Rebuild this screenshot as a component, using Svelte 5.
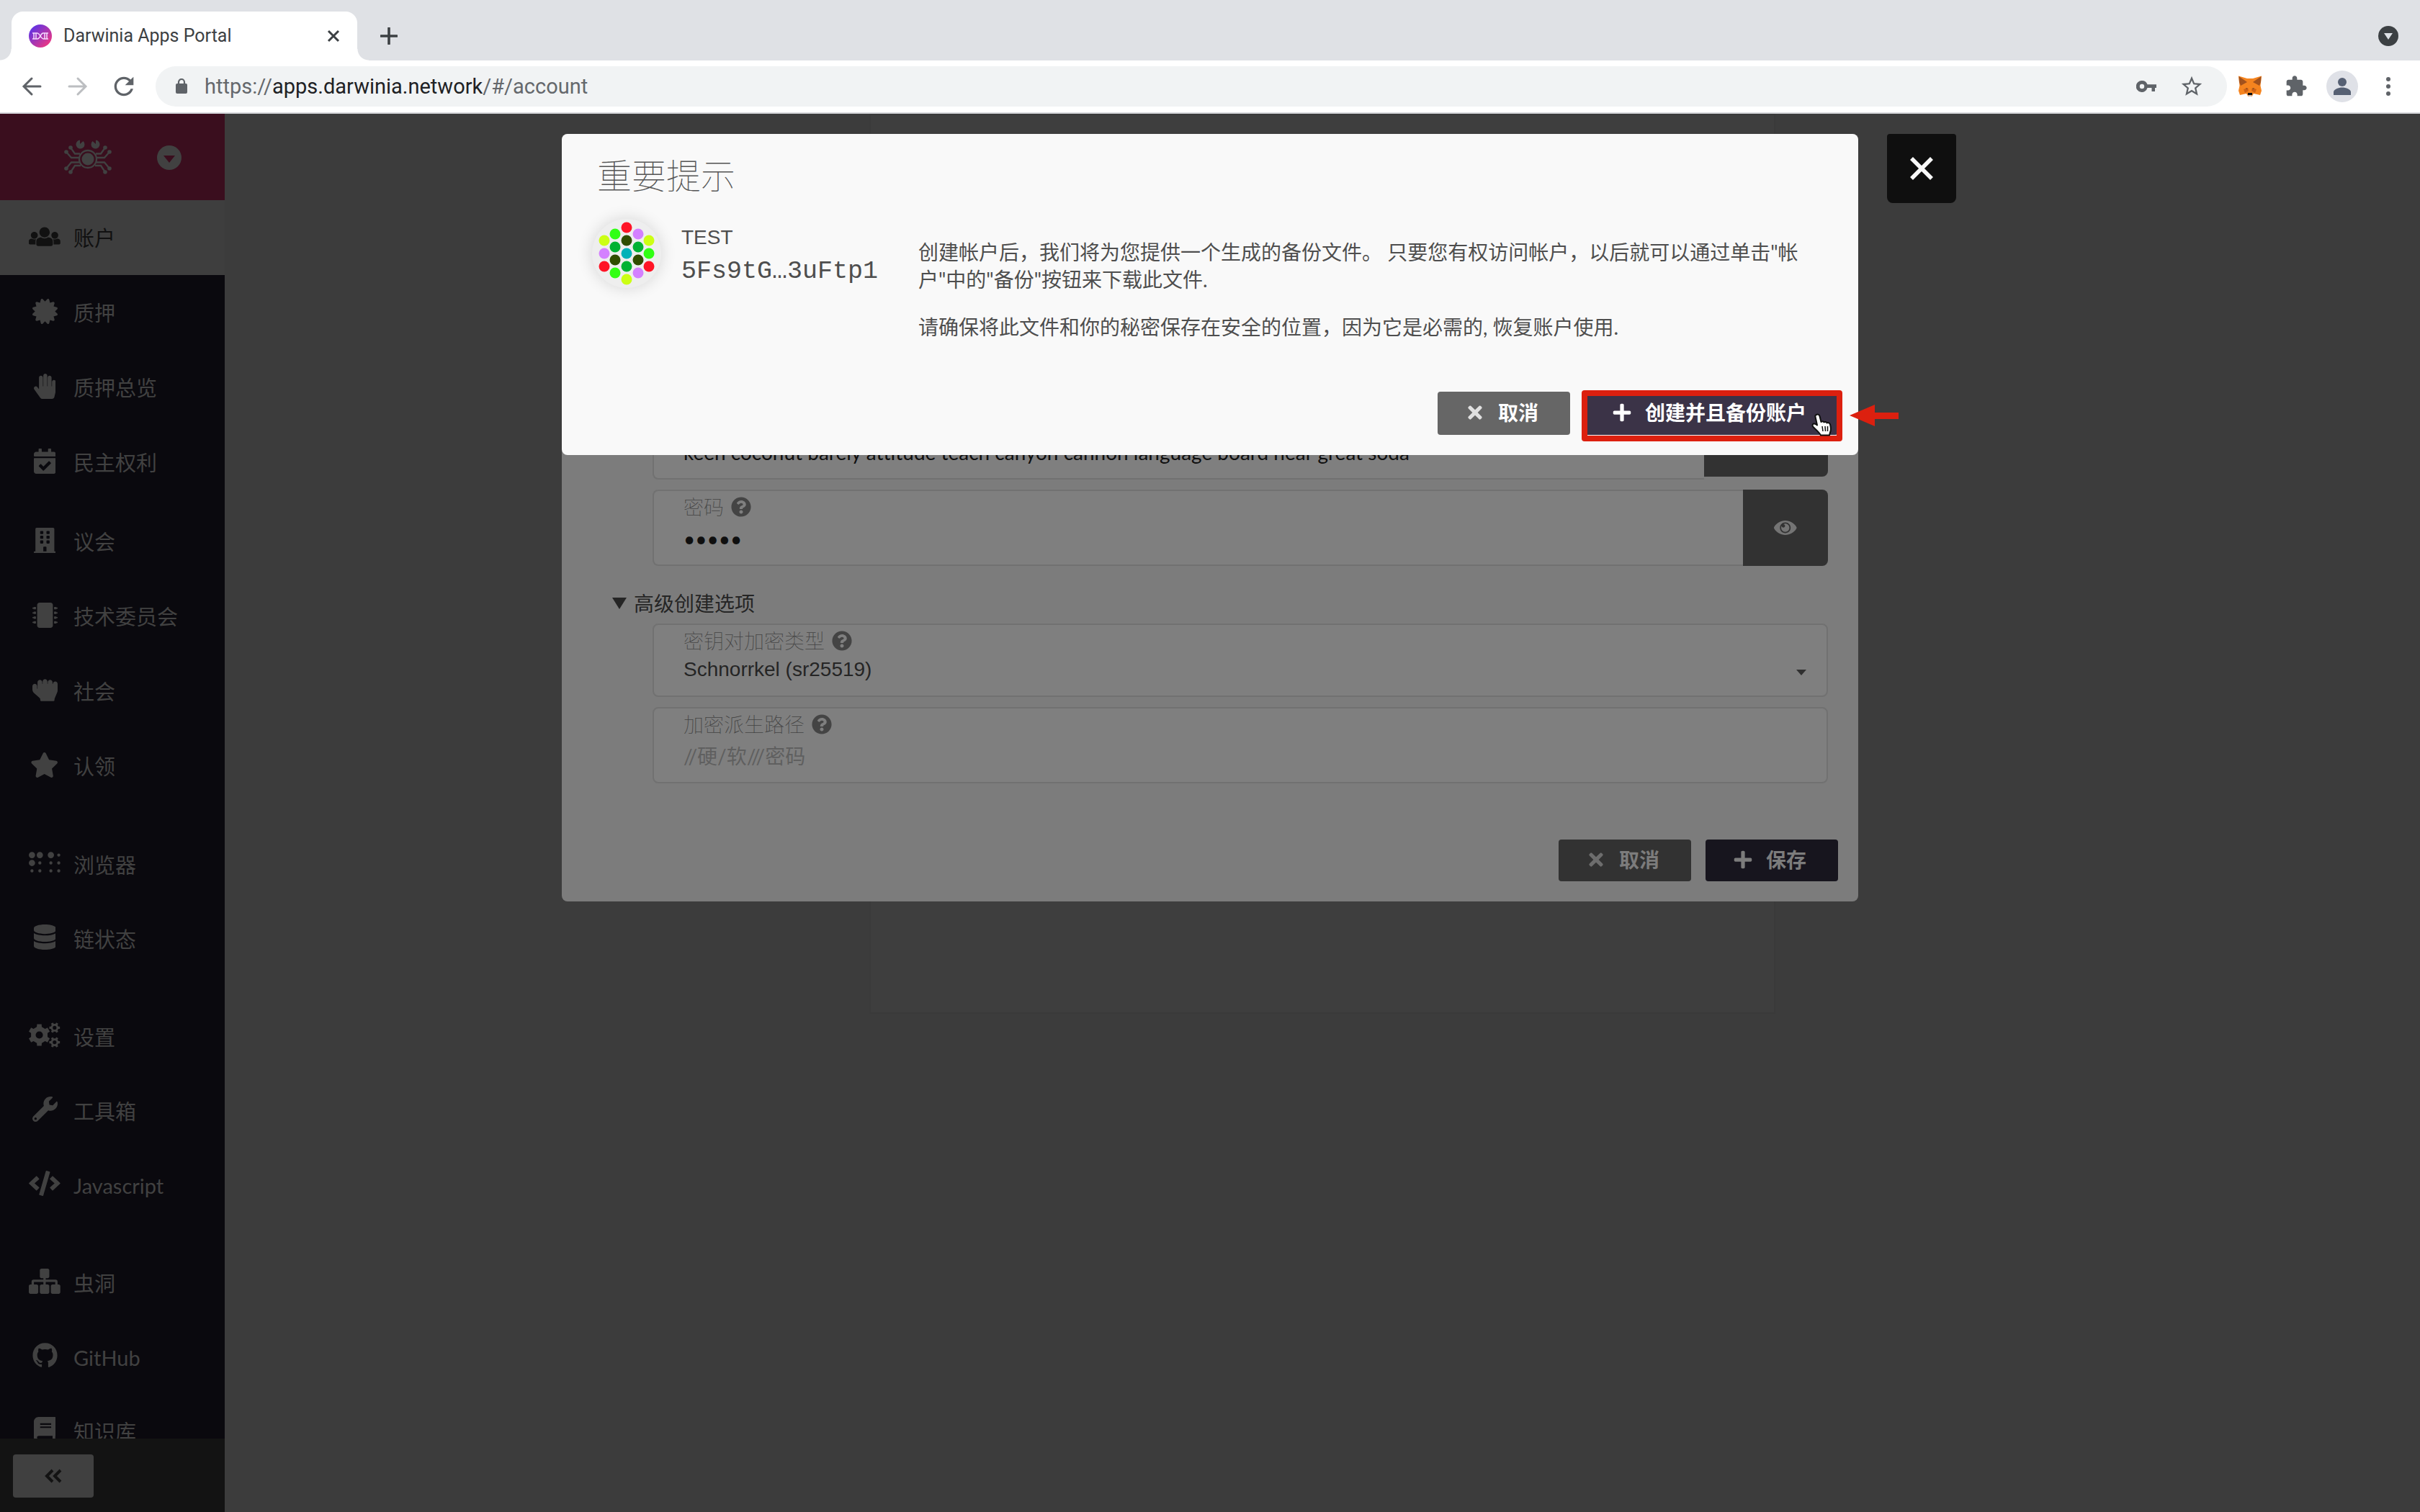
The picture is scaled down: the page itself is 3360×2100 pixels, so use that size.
<script>
  const glyphs = {
    users: { w: 640, d: 'M320 64c57.99 0 105 47.01 105 105s-47.01 105-105 105-105-47.01-105-105S262.01 64 320 64zm113.463 217.366l-39.982-9.996c-49.168 35.365-108.766 27.473-146.961 0l-39.982 9.996C174.485 289.379 152 318.177 152 351.216V412c0 19.882 16.118 36 36 36h264c19.882 0 36-16.118 36-36v-60.784c0-33.039-22.485-61.837-54.537-69.85zM528 300c38.66 0 70-31.34 70-70s-31.34-70-70-70-70 31.34-70 70 31.34 70 70 70zm-416 0c38.66 0 70-31.34 70-70s-31.34-70-70-70-70 31.34-70 70 31.34 70 70 70zm24 112v-60.784c0-16.551 4.593-32.204 12.703-45.599-29.988 14.72-63.336 8.708-85.69-7.37l-26.655 6.664C14.99 310.252 0 329.452 0 351.477V392c0 13.255 10.745 24 24 24h112.169a52.417 52.417 0 0 1-.169-4zm467.642-107.09l-26.655-6.664c-27.925 20.086-60.89 19.233-85.786 7.218C499.369 318.893 504 334.601 504 351.216V412c0 1.347-.068 2.678-.169 4H616c13.255 0 24-10.745 24-24v-40.523c0-22.025-14.99-41.225-36.358-46.567z' },
    certificate: { w: 512, d: 'M458.622 255.92l45.985-45.005c13.708-12.977 7.316-36.039-10.664-40.339l-62.65-15.99 17.661-62.015c4.991-17.838-11.829-34.663-29.661-29.671l-61.994 17.667-15.984-62.671C337.085.197 313.765-6.276 300.99 7.228L256 53.57 211.011 7.229c-12.63-13.351-36.047-7.234-40.325 10.668l-15.984 62.671-61.995-17.667C74.87 57.907 58.056 74.738 63.046 92.572l17.661 62.015-62.65 15.99C.069 174.878-6.31 197.944 7.392 210.915l45.985 45.005-45.985 45.004c-13.708 12.977-7.316 36.039 10.664 40.339l62.65 15.99-17.661 62.015c-4.991 17.838 11.829 34.663 29.661 29.671l61.994-17.667 15.984 62.671c4.439 18.575 27.696 24.018 40.325 10.668L256 458.61l44.989 46.001c12.5 13.488 35.987 7.486 40.325-10.668l15.984-62.671 61.994 17.667c17.836 4.994 34.651-11.837 29.661-29.671l-17.661-62.015 62.65-15.99c17.987-4.302 24.366-27.367 10.664-40.339l-45.984-45.004z' },
    handPaper: { w: 448, d: 'M408.781 128.007C386.356 127.578 368 146.36 368 168.79V256h-8V79.79c0-22.43-18.356-41.212-40.781-40.783C297.488 39.423 280 57.169 280 79v177h-8V40.79C272 18.36 253.644-.422 231.219.007 209.488.423 192 18.169 192 40v216h-8V80.79c0-22.43-18.356-41.212-40.781-40.783C121.488 40.423 104 58.169 104 80v235.992l-31.648-43.519c-12.993-17.866-38.009-21.817-55.877-8.823-17.865 12.994-21.815 38.01-8.822 55.877l125.601 172.705A48 48 0 0 0 172.073 512h197.59c22.274 0 41.622-15.324 46.724-37.006l26.508-112.66a192.011 192.011 0 0 0 5.104-43.975V168c.001-21.831-17.487-39.577-39.218-39.993z' },
    calendarCheck: { w: 448, d: 'M436 160H12c-6.627 0-12-5.373-12-12v-36c0-26.51 21.49-48 48-48h48V12c0-6.627 5.373-12 12-12h40c6.627 0 12 5.373 12 12v52h128V12c0-6.627 5.373-12 12-12h40c6.627 0 12 5.373 12 12v52h48c26.51 0 48 21.49 48 48v36c0 6.627-5.373 12-12 12zM12 192h424c6.627 0 12 5.373 12 12v260c0 26.51-21.49 48-48 48H48c-26.51 0-48-21.49-48-48V204c0-6.627 5.373-12 12-12zm333.296 95.947l-28.169-28.398c-4.667-4.705-12.265-4.736-16.97-.068L194.12 364.665l-45.98-46.352c-4.667-4.705-12.266-4.736-16.971-.068l-28.397 28.17c-4.705 4.667-4.736 12.265-.068 16.97l82.601 83.269c4.667 4.705 12.265 4.736 16.97.068l142.953-141.805c4.705-4.667 4.736-12.265.068-16.97z' },
    building: { w: 448, d: 'M436 480h-20V24c0-13.255-10.745-24-24-24H56C42.745 0 32 10.745 32 24v456H12c-6.627 0-12 5.373-12 12v20h448v-20c0-6.627-5.373-12-12-12zM128 76c0-6.627 5.373-12 12-12h40c6.627 0 12 5.373 12 12v40c0 6.627-5.373 12-12 12h-40c-6.627 0-12-5.373-12-12V76zm0 96c0-6.627 5.373-12 12-12h40c6.627 0 12 5.373 12 12v40c0 6.627-5.373 12-12 12h-40c-6.627 0-12-5.373-12-12v-40zm52 148h-40c-6.627 0-12-5.373-12-12v-40c0-6.627 5.373-12 12-12h40c6.627 0 12 5.373 12 12v40c0 6.627-5.373 12-12 12zm76 160h-64v-84c0-6.627 5.373-12 12-12h40c6.627 0 12 5.373 12 12v84zm64-172c0 6.627-5.373 12-12 12h-40c-6.627 0-12-5.373-12-12v-40c0-6.627 5.373-12 12-12h40c6.627 0 12 5.373 12 12v40zm0-96c0 6.627-5.373 12-12 12h-40c-6.627 0-12-5.373-12-12v-40c0-6.627 5.373-12 12-12h40c6.627 0 12 5.373 12 12v40zm0-96c0 6.627-5.373 12-12 12h-40c-6.627 0-12-5.373-12-12V76c0-6.627 5.373-12 12-12h40c6.627 0 12 5.373 12 12v40z' },
    microchip: { w: 512, d: chip() },
    handRock: { w: 512, d: 'M464.8 80c-26.9-.4-48.8 21.2-48.8 48h-8V96.8c0-26.3-20.9-48.3-47.2-48.8-26.9-.4-48.8 21.2-48.8 48v32h-8V80.8c0-26.3-20.9-48.3-47.2-48.8-26.9-.4-48.8 21.2-48.8 48v48h-8V96.8c0-26.3-20.9-48.3-47.2-48.8-26.9-.4-48.8 21.2-48.8 48v136l-8-7.1v-48.1c0-26.3-20.9-48.3-47.2-48.8C21.9 127.6 0 149.2 0 176v66.4c0 27.4 11.7 53.5 32.2 71.8l111.7 99.3c10.2 9.1 16.1 22.2 16.1 35.9v6.7c0 13.3 10.7 24 24 24h240c13.3 0 24-10.7 24-24v-2.9c0-12.8 2.6-25.5 7.5-37.3l49-116.3c5-11.8 7.5-24.5 7.5-37.3V128.8c0-26.3-20.9-48.4-47.2-48.8z' },
    star: { w: 576, d: 'M259.3 17.8L194 150.2 47.9 171.5c-26.2 3.8-36.7 36.1-17.7 54.6l105.7 103-25 145.5c-4.5 26.3 23.2 46 46.4 33.7L288 439.6l130.7 68.7c23.2 12.2 50.9-7.4 46.4-33.7l-25-145.5 105.7-103c19-18.5 8.5-50.8-17.7-54.6L382 150.2 316.7 17.8c-11.7-23.6-45.6-23.9-57.4 0z' },
    braille: { w: 640, d: [[64, 96, 64], [224, 96, 64], [64, 256, 64], [448, 96, 64], [608, 96, 32], [224, 256, 32], [448, 256, 32], [608, 256, 32], [64, 416, 32], [224, 416, 32], [448, 416, 32], [608, 416, 32]].map(([x, y, r]) => dot(x, y, r)).join('') },
    database: { w: 448, d: 'M448 73.143v45.714C448 159.143 347.667 192 224 192S0 159.143 0 118.857V73.143C0 32.857 100.333 0 224 0s224 32.857 224 73.143zM448 176v102.857C448 319.143 347.667 352 224 352S0 319.143 0 278.857V176c48.125 33.143 136.208 48.572 224 48.572S399.874 209.143 448 176zm0 160v102.857C448 479.143 347.667 512 224 512S0 479.143 0 438.857V336c48.125 33.143 136.208 48.572 224 48.572S399.874 369.143 448 336z' },
    cogs: { w: 640, d: gear(213, 256, 172, 224, 74, 30) + gear(524, 108, 80, 110, 38, 0) + gear(524, 404, 80, 110, 38, 0) },
    wrench: { w: 512, d: 'M507.73 109.1c-2.24-9.03-13.54-12.09-20.12-5.51l-74.36 74.36-67.88-11.31-11.31-67.88 74.36-74.36c6.62-6.62 3.43-17.9-5.66-20.16-47.38-11.74-99.55.91-136.58 37.93-39.64 39.64-50.55 97.1-34.05 147.2L18.74 402.76c-24.99 24.99-24.99 65.51 0 90.5 24.99 24.99 65.51 24.99 90.5 0l213.21-213.21c50.12 16.71 107.47 5.68 147.37-34.22 37.07-37.07 49.7-89.32 37.91-136.73zM64 472c-13.25 0-24-10.75-24-24 0-13.26 10.75-24 24-24s24 10.74 24 24c0 13.25-10.75 24-24 24z' },
    code: { w: 640, d: 'M278.9 511.5l-61-17.7c-6.4-1.8-10-8.5-8.2-14.9L346.2 8.7c1.8-6.4 8.5-10 14.9-8.2l61 17.7c6.4 1.8 10 8.5 8.2 14.9L293.8 503.3c-1.9 6.4-8.5 10.1-14.9 8.2zm-114-112.2l43.5-46.4c4.6-4.9 4.3-12.7-.8-17.2L117 256l90.6-79.7c5.1-4.5 5.5-12.3.8-17.2l-43.5-46.4c-4.5-4.8-12.1-5.1-17-.5L3.8 247.2c-5.1 4.7-5.1 12.8 0 17.5l144.1 135.1c4.9 4.6 12.5 4.4 17-.5zm327.2.6l144.1-135.1c5.1-4.7 5.1-12.8 0-17.5L492.1 112.1c-4.8-4.5-12.4-4.3-17 .5L431.6 159c-4.6 4.9-4.3 12.7.8 17.2L523 256l-90.6 79.7c-5.1 4.5-5.5 12.3-.8 17.2l43.5 46.4c4.5 4.9 12.1 5.1 17 .6z' },
    sitemap: { w: 640, d: 'M32 320c-17.67 0-32 14.33-32 32v128c0 17.67 14.33 32 32 32h128c17.67 0 32-14.33 32-32V352c0-17.67-14.33-32-32-32h-56v-48h192v48h-40c-17.67 0-32 14.33-32 32v128c0 17.67 14.33 32 32 32h128c17.67 0 32-14.33 32-32V352c0-17.67-14.33-32-32-32h-40v-48h192v48h-56c-17.67 0-32 14.33-32 32v128c0 17.67 14.33 32 32 32h128c17.67 0 32-14.33 32-32V352c0-17.67-14.33-32-32-32h-24v-57.590c0-21.170-17.230-38.410-38.410-38.410H344v-32h40c17.670 0 32-14.330 32-32V32c0-17.670-14.330-32-32-32H256c-17.670 0-32 14.330-32 32v128c0 17.670 14.330 32 32 32h40v32H94.410C73.230 224 56 241.230 56 262.410V320z' },
    github: { w: 512, d: 'M256 5C115 5 6 118 6 256c0 111 70 205 169 238 13 2 17-6 17-12l-.4-46c-68 14-82-29-82-29-11-28-27-36-27-36-22-15 2-15 2-15 25 2 38 26 38 26 22 38 58 27 72 21 2-16 9-27 16-33-55-6-113-28-113-124 0-27 10-50 26-67-3-6-11-32 2-66 0 0 21-7 69 26 20-6 42-9 63-9s43 3 63 9c48-33 69-26 69-26 14 34 5 60 2 66 16 17 26 40 26 67 0 96-58 117-114 124 9 8 17 23 17 46l-.4 69c0 7 5 14 17 12C437 461 506 367 506 256 506 118 397 5 256 5z' },
    book: { w: 448, d: 'M448 360V24c0-13.3-10.7-24-24-24H96C43 0 0 43 0 96v320c0 53 43 96 96 96h328c13.3 0 24-10.7 24-24v-16c0-7.5-3.5-14.3-8.9-18.7-4.2-15.4-4.2-59.3 0-74.7 5.4-4.3 8.9-11.1 8.9-18.6zM128 134c0-3.3 2.7-6 6-6h212c3.3 0 6 2.7 6 6v20c0 3.3-2.7 6-6 6H134c-3.3 0-6-2.7-6-6v-20zm0 64c0-3.3 2.7-6 6-6h212c3.3 0 6 2.7 6 6v20c0 3.3-2.7 6-6 6H134c-3.3 0-6-2.7-6-6v-20zm253.4 250H96c-17.7 0-32-14.3-32-32 0-17.6 14.4-32 32-32h285.4c-1.9 17.1-1.9 46.9 0 64z' },
    question: { w: 512, d: 'M504 256c0 136.997-111.043 248-248 248S8 392.997 8 256C8 119.083 119.043 8 256 8s248 111.083 248 248zM262.655 90c-54.497 0-89.255 22.957-116.549 63.758-3.536 5.286-2.353 12.415 2.715 16.258l34.699 26.31c5.205 3.947 12.621 3.008 16.665-2.122 17.864-22.658 30.113-35.797 57.303-35.797 20.429 0 45.698 13.148 45.698 32.958 0 14.976-12.363 22.667-32.534 33.976C247.128 238.528 216 254.941 216 296v4c0 6.627 5.373 12 12 12h56c6.627 0 12-5.373 12-12v-1.333c0-28.462 83.186-29.647 83.186-106.667 0-58.002-60.165-102-116.531-102zM256 338c-25.365 0-46 20.635-46 46 0 25.364 20.635 46 46 46s46-20.636 46-46c0-25.365-20.635-46-46-46z' },
    eye: { w: 576, d: 'M569.354 231.631C512.969 135.949 407.81 72 288 72 168.14 72 63.004 135.994 6.646 231.631a47.999 47.999 0 0 0 0 48.739C63.031 376.051 168.19 440 288 440c119.86 0 224.996-63.994 281.354-159.631a47.997 47.997 0 0 0 0-48.738zM288 392c-75.162 0-136-60.827-136-136 0-75.162 60.826-136 136-136 75.162 0 136 60.826 136 136 0 75.162-60.826 136-136 136zm104-136c0 57.438-46.562 104-104 104s-104-46.562-104-104c0-17.708 4.431-34.379 12.236-48.973l-.001.032c0 23.651 19.173 42.823 42.824 42.823s42.824-19.173 42.824-42.823c0-23.651-19.173-42.824-42.824-42.824l-.032.001C253.621 156.431 270.292 152 288 152c57.438 0 104 46.562 104 104z' },
    plus: { w: 448, d: 'M416 208H272V64c0-17.67-14.33-32-32-32h-32c-17.67 0-32 14.33-32 32v144H32c-17.67 0-32 14.33-32 32v32c0 17.67 14.33 32 32 32h144v144c0 17.67 14.33 32 32 32h32c17.67 0 32-14.33 32-32V304h144c17.67 0 32-14.33 32-32v-32c0-17.67-14.33-32-32-32z' },
    times: { w: 352, d: 'M242.72 256l100.07-100.07c12.28-12.28 12.28-32.19 0-44.48l-22.24-22.24c-12.28-12.28-32.19-12.28-44.48 0L176 189.28 75.93 89.21c-12.28-12.28-32.19-12.28-44.48 0L9.21 111.45c-12.28 12.28-12.28 32.19 0 44.48L109.28 256 9.21 356.07c-12.28 12.28-12.28 32.19 0 44.48l22.24 22.24c12.28 12.28 32.2 12.28 44.48 0L176 322.72l100.07 100.07c12.28 12.28 32.2 12.28 44.48 0l22.24-22.24c12.28-12.28 12.28-32.19 0-44.48L242.72 256z' },
  };

  function dot(x, y, r) {
    return `M${x - r} ${y}a${r} ${r} 0 1 0 ${2 * r} 0a${r} ${r} 0 1 0 ${-2 * r} 0z`;
  }

  function gear(cx, cy, inner, outer, hole, phase) {
    const steps = [[-17, inner], [-12, outer], [12, outer], [17, inner]];
    const points = [];
    for (let tooth = 0; tooth < 6; tooth++) {
      for (const [offset, radius] of steps) {
        const a = ((phase + tooth * 60 + offset) * Math.PI) / 180;
        points.push(`${(cx + radius * Math.cos(a)).toFixed(1)} ${(cy + radius * Math.sin(a)).toFixed(1)}`);
      }
    }
    return `M${points.join('L')}z` + dot(cx, cy, hole);
  }

  function chip() {
    const pins = [88, 184, 280, 376]
      .map((y) => `M440 ${y}h42a6 6 0 0 1 6 6v6h18a6 6 0 0 1 6 6v12a6 6 0 0 1-6 6h-18v6a6 6 0 0 1-6 6h-42zM72 ${y}v48H30a6 6 0 0 1-6-6v-6H6a6 6 0 0 1-6-6v-12a6 6 0 0 1 6-6h18v-6a6 6 0 0 1 6-6z`)
      .join('');
    return 'M416 48v416c0 26.51-21.49 48-48 48H144c-26.51 0-48-21.49-48-48V48c0-26.51 21.49-48 48-48h224c26.51 0 48 21.49 48 48z' + pins;
  }

  const menu = [
    [
      { icon: 'users', text: '账户', active: true },
      { icon: 'certificate', text: '质押' },
      { icon: 'handPaper', text: '质押总览' },
      { icon: 'calendarCheck', text: '民主权利' },
    ],
    [
      { icon: 'building', text: '议会' },
      { icon: 'microchip', text: '技术委员会' },
      { icon: 'handRock', text: '社会' },
      { icon: 'star', text: '认领' },
    ],
    [
      { icon: 'braille', text: '浏览器' },
      { icon: 'database', text: '链状态' },
    ],
    [
      { icon: 'cogs', text: '设置' },
      { icon: 'wrench', text: '工具箱' },
      { icon: 'code', text: 'Javascript' },
    ],
    [
      { icon: 'sitemap', text: '虫洞' },
      { icon: 'github', text: 'GitHub' },
      { icon: 'book', text: '知识库' },
    ],
  ];

  const red = '#ff1426', lime = '#ccff14', green = '#31ff14', leaf = '#00b233';
  const olive = '#304d00', violet = '#d480ff', teal = '#00b2b8';
  const identicon = [
    [0, -36, red], [0, -18, olive], [0, 0, teal], [0, 18, leaf], [0, 36, lime],
    [-16, -27, green], [-16, -9, leaf], [-16, 9, olive], [-16, 27, green],
    [16, -27, violet], [16, -9, leaf], [16, 9, olive], [16, 27, violet],
    [-31, -18, lime], [-31, 0, violet], [-31, 18, red],
    [31, -18, lime], [31, 0, green], [31, 18, red],
  ];

  let seed = $state('keen coconut barely attitude teach canyon cannon language board near great soda');
  let password = $state('12345');
  let derive = $state('');
</script>

{#snippet icon(name)}
  <svg class="glyph" viewBox="0 0 {glyphs[name].w} 512" aria-hidden="true"><path fill-rule={name === 'cogs' ? 'evenodd' : 'nonzero'} d={glyphs[name].d} /></svg>
{/snippet}

<div class="window">
  <header>
    <div class="tabs">
      <div class="tab">
        <svg class="favicon" viewBox="0 0 32 32" aria-hidden="true">
          <defs>
            <linearGradient id="fav" x1="0" y1="0" x2="1" y2="1">
              <stop offset=".1" stop-color="#5b33e8" /><stop offset=".9" stop-color="#f0377f" />
            </linearGradient>
          </defs>
          <circle cx="16" cy="16" r="16" fill="url(#fav)" />
          <path d="M5 12h7M5 20h7M7 12v8M10 12v8M20 12h7M20 20h7M22 12v8M25 12v8M12 12c4 1 4 7 8 8M12 20c2 0 3-2 4-4s2-4 4-4" fill="none" stroke="#f3d9ff" stroke-width="1.5" />
        </svg>
        <span class="tab-title">Darwinia Apps Portal</span>
        <button class="plain" aria-label="Close tab">
          <svg width="18" height="18" viewBox="0 0 18 18"><path d="M2 2l14 14M16 2L2 16" stroke="#3c4043" stroke-width="3" /></svg>
        </button>
      </div>
      <button class="plain new-tab" aria-label="New tab">
        <svg width="24" height="24" viewBox="0 0 24 24"><path d="M12 1v22M1 12h22" stroke="#3c4043" stroke-width="3.6" stroke-linecap="round" /></svg>
      </button>
      <button class="plain search-tabs" aria-label="Search tabs">
        <svg width="28" height="28" viewBox="0 0 28 28"><circle cx="14" cy="14" r="14" fill="#3c4043" /><path d="M8 10h12l-6 9z" fill="#dee1e6" /></svg>
      </button>
    </div>
    <div class="toolbar">
      <button class="plain nav" aria-label="Back">
        <svg width="28" height="28" viewBox="0 0 28 28"><path d="M26 14H4M14 3L3 14l11 11" fill="none" stroke="#5f6368" stroke-width="3" stroke-linecap="round" /></svg>
      </button>
      <button class="plain nav" aria-label="Forward">
        <svg width="28" height="28" viewBox="0 0 28 28"><path d="M2 14h22M14 3l11 11-11 11" fill="none" stroke="#bcbec1" stroke-width="3" stroke-linecap="round" /></svg>
      </button>
      <button class="plain nav" aria-label="Reload">
        <svg width="40" height="40" viewBox="0 0 24 24"><path fill="#5f6368" d="M17.65 6.35C16.2 4.9 14.21 4 12 4c-4.42 0-7.99 3.58-7.99 8s3.57 8 7.99 8c3.73 0 6.84-2.55 7.73-6h-2.08c-.82 2.33-3.04 4-5.65 4-3.31 0-6-2.69-6-6s2.69-6 6-6c1.66 0 3.14.69 4.22 1.78L13 11h7V4l-2.35 2.35z" /></svg>
      </button>
      <div class="omnibox">
        <svg width="16" height="22" viewBox="0 0 16 22" aria-hidden="true"><rect y="7" width="16" height="14" rx="2" fill="#5f6368" /><path d="M4 8V5a4 4 0 0 1 8 0v3" fill="none" stroke="#5f6368" stroke-width="2.2" /></svg>
        <span class="url">https://<b>apps.darwinia.network</b>/#/account</span>
        <button class="plain key" aria-label="Saved passwords">
          <svg width="28" height="16" viewBox="0 0 28 16"><path fill="#5f6368" fill-rule="evenodd" d="M8 0a8 8 0 0 1 7.5 5.200H28v4.800h-2v5h-4.500v-5h-6A8 8 0 1 1 8 0zM8 4.800a3.200 3.200 0 1 0 0 6.400a3.200 3.200 0 1 0 0-6.400z" /></svg>
        </button>
        <button class="plain" aria-label="Bookmark">
          <svg width="34" height="34" viewBox="0 0 24 24"><path fill="#5f6368" d="M22 9.240l-7.190-.62L12 2 9.190 8.630 2 9.240l5.460 4.730L5.820 21 12 17.270 18.180 21l-1.630-7.030L22 9.240zM12 15.400l-3.760 2.270 1-4.280-3.320-2.880 4.380-.38L12 6.100l1.710 4.040 4.380.38-3.320 2.880 1 4.280L12 15.400z" /></svg>
        </button>
      </div>
      <button class="plain ext" aria-label="MetaMask">
        <svg width="32" height="30" viewBox="0 0 32 30">
          <path fill="#f5841f" d="M0 .5L12 4h8L32 .5 30.500 14 32 21l-2 6-9-2-2.500 4h-5L11 25l-9 2-2-6 1.500-7z" />
          <path fill="#a2521d" d="M.5 1L12 9 3 14 1 9zM31.500 1L20 9l9 5 2-5z" />
          <path fill="#cd6116" d="M7 19l6-2 1 4-5 3zM25 19l-6-2-1 4 5 3z" />
          <path fill="#d7c1b3" d="M13 26h6l-1 3h-4z" /><path fill="#111" d="M13 24h6v3h-6z" /><path fill="#333" d="M10 17l3 1.500h-2zM22 17l-3 1.500h2z" />
        </svg>
      </button>
      <button class="plain ext" aria-label="Extensions">
        <svg width="32" height="32" viewBox="0 0 24 24"><path fill="#5f6368" d="M20.500 11H19V7c0-1.100-.9-2-2-2h-4V3.500C13 2.120 11.880 1 10.500 1S8 2.120 8 3.500V5H4c-1.100 0-1.990.9-1.990 2v3.800H3.500c1.490 0 2.700 1.210 2.700 2.700s-1.210 2.700-2.700 2.700H2V20c0 1.100.9 2 2 2h3.800v-1.500c0-1.490 1.210-2.700 2.700-2.700 1.490 0 2.700 1.210 2.700 2.700V22H17c1.100 0 2-.9 2-2v-4h1.500c1.380 0 2.500-1.120 2.500-2.500S21.880 11 20.500 11z" /></svg>
      </button>
      <button class="plain ext" aria-label="Profile">
        <svg width="44" height="44" viewBox="0 0 44 44"><circle cx="22" cy="22" r="22" fill="#dfe1e7" /><circle cx="22" cy="16" r="6" fill="#566073" /><path d="M10 34v-4c0-4 7-6.500 12-6.500S34 26 34 30v4z" fill="#566073" /></svg>
      </button>
      <button class="plain ext" aria-label="Menu">
        <svg width="6" height="26" viewBox="0 0 6 26" fill="#5f6368"><circle cx="3" cy="3" r="3" /><circle cx="3" cy="13" r="3" /><circle cx="3" cy="23" r="3" /></svg>
      </button>
    </div>
  </header>

  <div class="app">
    <nav class="sidebar">
      <div class="brand">
        <svg class="crab" width="66" height="50" viewBox="0 0 66 50" aria-hidden="true">
          <g fill="none" stroke="#414141" stroke-width="2.300">
            <circle cx="33" cy="27" r="12" />
            <path d="M3 17l7 8h11M9 11l6 8.500h7M3 40l7-8.500h11M9 45l6-9h8M63 17l-7 8H45M57 11l-6 8.500h-7M63 40l-7-8.500H45M57 45l-6-9h-8" />
          </g>
          <g fill="#414141">
            <circle cx="33" cy="27" r="8.500" />
            <circle cx="3" cy="17" r="2.800" /><circle cx="9" cy="11" r="2.800" /><circle cx="3" cy="40" r="2.800" /><circle cx="9" cy="45" r="2.800" />
            <circle cx="63" cy="17" r="2.800" /><circle cx="57" cy="11" r="2.800" /><circle cx="63" cy="40" r="2.800" /><circle cx="57" cy="45" r="2.800" />
            <path d="M22 .5v5.500l4.500-4A6 6 0 1 1 22 .5zM44 .5v5.500l-4.500-4A6 6 0 1 0 44 .5z" />
          </g>
        </svg>
        <button class="plain" aria-label="Switch network">
          <svg width="34" height="34" viewBox="0 0 34 34"><circle cx="17" cy="17" r="17" fill="#414141" /><path d="M9 14h16l-8 10z" fill="#3a0e1e" /></svg>
        </button>
      </div>
      <div class="menu">
        {#each menu as group}
          <ul>
            {#each group as item}
              <li>
                <a href="#/{item.icon}" class:active={item.active}>
                  <span class="pic">{@render icon(item.icon)}</span>
                  <span>{item.text}</span>
                </a>
              </li>
            {/each}
          </ul>
        {/each}
      </div>
      <div class="collapse">
        <button aria-label="Collapse">
          <svg width="24" height="20" viewBox="0 0 24 20"><path d="M11 2L3 10l8 8M22 2l-8 8 8 8" fill="none" stroke="#131313" stroke-width="4" /></svg>
        </button>
      </div>
    </nav>

    <main><div class="segment"></div></main>

    <div class="overlay">
      <div class="stack">
        <form class="modal create" onsubmit={(e) => e.preventDefault()}>
          <div class="field split">
            <div class="entry bare"><input type="text" aria-label="seed" bind:value={seed} /></div>
            <button type="button" class="side wide" aria-label="seed type"></button>
          </div>
          <div class="field">
            <div class="entry">
              <label for="pw">密码 {@render icon('question')}</label>
              <input id="pw" type="password" bind:value={password} />
            </div>
            <button type="button" class="side" aria-label="show">{@render icon('eye')}</button>
          </div>
          <details open>
            <summary><svg width="20" height="16" viewBox="0 0 20 16" aria-hidden="true"><path d="M0 0h20L10 16z" /></svg>高级创建选项</summary>
            <div class="field">
              <div class="entry closed choice">
                <label for="kind">密钥对加密类型 {@render icon('question')}</label>
                <select id="kind"><option>Schnorrkel (sr25519)</option></select>
                <svg class="caret" width="14" height="8" viewBox="0 0 14 8" aria-hidden="true"><path d="M0 0h14L7 8z" /></svg>
              </div>
            </div>
            <div class="field">
              <div class="entry closed">
                <label for="path">加密派生路径 {@render icon('question')}</label>
                <input id="path" type="text" placeholder="//硬/软///密码" bind:value={derive} />
              </div>
            </div>
          </details>
          <div class="actions">
            <button type="button" class="act grey">{@render icon('times')}取消</button>
            <button type="button" class="act dark">{@render icon('plus')}保存</button>
          </div>
        </form>

        <section class="modal notice">
          <h1>重要提示</h1>
          <div class="body">
            <svg class="ident" viewBox="-48 -48 96 96" aria-hidden="true">
              {#each identicon as [x, y, fill]}<circle cx={x} cy={y} r="7.500" {fill} />{/each}
            </svg>
            <div class="who">
              <div class="name">TEST</div>
              <div class="addr">5Fs9tG…3uFtp1</div>
            </div>
            <div class="copy">
              <p>创建帐户后，我们将为您提供一个生成的备份文件。 只要您有权访问帐户，以后就可以通过单击"帐户"中的"备份"按钮来下载此文件.</p>
              <p>请确保将此文件和你的秘密保存在安全的位置，因为它是必需的, 恢复账户使用.</p>
            </div>
          </div>
          <div class="actions">
            <button type="button" class="act grey">{@render icon('times')}取消</button>
            <div class="marked">
              <button type="button" class="act dark">{@render icon('plus')}创建并且备份账户</button>
              <div class="mark"></div>
              <svg class="arrow" width="68" height="30" viewBox="0 0 68 30" aria-hidden="true"><path fill="#dc200f" d="M0 15L35 0v11h33v9H35v10z" /></svg>
              <svg class="hand" width="30" height="32" viewBox="0 0 30 32" aria-hidden="true">
                <path fill="#fff" stroke="#111" stroke-width="2" stroke-linejoin="round" d="M7 2c2-1 4 0 4.500 2l2 8c1-1 3-1 4 .5 1-1 3.500-.5 4 1 1.500-1 4 0 4.500 2 1 4 2 7 0 11l-1 4H13c-2-4-6-7-10-11-2-2-2-4 0-5 2-.5 4 1 5 2L5.500 5c-.5-1.500 0-2.500 1.500-3z" />
                <path d="M15 18l1 7M19 18l.5 7M22.500 18v7" stroke="#111" stroke-width="1.500" />
              </svg>
            </div>
          </div>
        </section>
        <button class="close" aria-label="Close">
          <svg width="32" height="32" viewBox="0 0 32 32"><path d="M2 2l28 28M30 2L2 30" stroke="#f9f9f9" stroke-width="5.600" /></svg>
        </button>
      </div>
    </div>
  </div>
</div>

<style>
  :global(body) { margin: 0; }
  .window { height: 100vh; display: flex; flex-direction: column; overflow: hidden; font: 28px/38px Lato, 'Noto Sans CJK SC', sans-serif; }
  .window :global(*) { box-sizing: border-box; }
  svg { display: block; flex: none; }
  button, input, select { font: inherit; color: inherit; margin: 0; border: 0; padding: 0; }
  .plain { background: none; display: flex; align-items: center; justify-content: center; flex: none; }
  .glyph { fill: currentColor; height: 35px; }

  header { flex: none; background: #fff; border-bottom: 2px solid #d5d6da; font-family: Roboto, sans-serif; }
  .tabs { height: 84px; padding: 16px 30px 0 16px; display: flex; align-items: center; background: #dfe1e5; }
  .tab { width: 480px; height: 68px; padding: 0 24px; display: flex; align-items: center; gap: 16px; background: #fff; border-radius: 16px 16px 0 0; position: relative; }
  .tab::before, .tab::after { content: ''; position: absolute; bottom: 0; width: 16px; height: 16px; }
  .tab::before { right: 100%; background: radial-gradient(circle at 0 0, #dfe1e5 15px, #fff 16px); }
  .tab::after { left: 100%; background: radial-gradient(circle at 100% 0, #dfe1e5 15px, #fff 16px); }
  .favicon { width: 32px; height: 32px; }
  .tab-title { flex: 1; font-size: 25px; color: #3c4043; }
  .new-tab { margin-left: 32px; }
  .search-tabs { margin-left: auto; }
  .toolbar { height: 72px; padding: 0 12px; display: flex; align-items: center; }
  .nav { width: 64px; height: 56px; }
  .omnibox { flex: 1; height: 56px; margin-left: 12px; padding: 0 32px 0 28px; display: flex; align-items: center; gap: 24px; background: #f1f3f4; border-radius: 28px; }
  .url { flex: 1; font-size: 29px; color: #65686c; }
  .url b { font-weight: 400; color: #202124; }
  .key { margin-right: 8px; }
  .ext { width: 64px; height: 56px; }

  .app { flex: 1; min-height: 0; position: relative; display: flex; background: #3c3c3c; }
  .sidebar { width: 312px; display: flex; flex-direction: column; background: #0a090e; color: #414141; }
  .brand { height: 120px; flex: none; padding: 2px 0 0 89px; display: flex; align-items: center; gap: 63px; background: #3a0e1e; }
  .menu { flex: 1; min-height: 0; overflow: hidden; font-size: 29px; }
  .menu ul { list-style: none; margin: 0; padding: 0; }
  .menu ul + ul { margin-top: 6px; }
  .menu ul + ul + ul { margin-top: 33px; }
  .menu a { height: 104px; padding: 2px 0 0 40px; display: flex; align-items: center; gap: 18px; color: inherit; text-decoration: none; }
  .menu ul + ul + ul a { height: 103px; }
  .menu a.active { background: #3e3e3e; color: #111; }
  .pic { width: 44px; padding-bottom: 6px; display: flex; justify-content: center; }
  .collapse { height: 102px; flex: none; padding: 22px 18px; background: #131313; }
  .collapse button { width: 112px; height: 60px; display: flex; align-items: center; justify-content: center; background: #404040; border-radius: 4px; }

  main { flex: 1; padding: 0 32px; }
  .segment { max-width: 1258px; height: 1250px; margin: 0 auto; background: #3e3e3e; border: 2px solid #3a3a3a; }
  .overlay { position: absolute; inset: 0; padding: 28px 20px; display: flex; justify-content: center; align-items: flex-start; }
  .stack { position: relative; width: 1800px; display: grid; align-items: start; }
  .modal { grid-area: 1 / 1; border-radius: 8px; }
  .create { padding: 374px 42px 28px 126px; background: #7c7c7c; color: #252525; }
  .field { display: flex; min-height: 106px; }
  .field + .field { margin-top: 14px; }
  .entry { flex: 1; padding: 3px 42px 16px 41px; border: 2px solid #717171; border-right: 0; border-radius: 8px 0 0 8px; background: #7f7f7f; display: flex; flex-direction: column; gap: 6px; position: relative; }
  .entry.closed { border-right: 2px solid #717171; border-radius: 8px; }
  .entry.bare { padding-top: 47px; }
  .entry.choice { gap: 2px; }
  .field:has(.choice) { min-height: 102px; }
  .entry input { height: 38px; width: 100%; background: none; color: #0f0f0f; outline: 0; font-variant-ligatures: none; }
  .entry select { height: 38px; width: 100%; appearance: none; background: none; font-family: 'Liberation Sans', sans-serif; }
  .entry input::placeholder { color: #5f5f5f; opacity: 1; }
  label { display: flex; align-items: center; gap: 10px; font-weight: 100; color: #444; }
  label .glyph { height: 28px; }
  .caret { position: absolute; right: 28px; bottom: 28px; fill: #303030; }
  .side { width: 118px; display: flex; align-items: center; justify-content: center; background: #323232; color: #747474; border-radius: 0 8px 8px 0; }
  .side .glyph { height: 28px; }
  .side.wide { width: 172px; height: 102px; }
  summary { display: flex; align-items: center; gap: 10px; margin: 33px 0 9px -56px; list-style: none; }
  summary svg { fill: #252525; }
  .actions { display: flex; justify-content: flex-end; gap: 20px; }
  .create .actions { margin: 78px -14px 0 0; }
  .act { height: 60px; padding: 0 44px 2px 36px; display: flex; align-items: center; gap: 16px; border-radius: 4px; font-weight: 700; white-space: nowrap; color: #fff; }
  .act .glyph { width: 32px; height: 28px; }
  .create .act { height: 58px; color: #7c7c7c; }
  .grey { background: #666; }
  .grey .glyph { opacity: .8; }
  .dark { background: #3b3347; }
  .create .grey { background: #323232; }
  .create .dark { background: #17151e; }

  .notice { position: relative; z-index: 1; padding: 30px 28px 28px 42px; background: #f9f9f9; color: #4e4e4e; }
  h1 { margin: 0 0 32px 7px; font-size: 48px; line-height: 56px; font-weight: 100; color: #555; }
  .body { display: grid; grid-template-columns: 96px 301px 1fr; gap: 28px; padding-right: 36px; }
  .ident { width: 96px; height: 96px; border-radius: 50%; background: #eee; box-shadow: 0 0 20px 2px rgba(0, 0, 0, .12); }
  .name { margin-top: 7px; font-family: 'Liberation Sans', sans-serif; }
  .addr { font: 35px/48px 'Liberation Mono', monospace; margin-top: 4px; }
  .copy { padding-top: 27px; }
  .copy p { margin: 0 0 28px; }
  .notice .actions { margin-top: 43px; }
  .marked { position: relative; }
  .mark { position: absolute; inset: -2px -6px -9px -4px; border: 8px solid #dc200f; border-radius: 4px; }
  .arrow { position: absolute; left: 100%; top: 18px; margin-left: 16px; }
  .hand { position: absolute; right: 7px; bottom: -2px; }
  .close { position: absolute; left: 100%; top: 0; margin-left: 40px; width: 96px; height: 96px; display: flex; align-items: center; justify-content: center; background: #0f0f0f; border-radius: 4px 4px 8px 8px; }
</style>
